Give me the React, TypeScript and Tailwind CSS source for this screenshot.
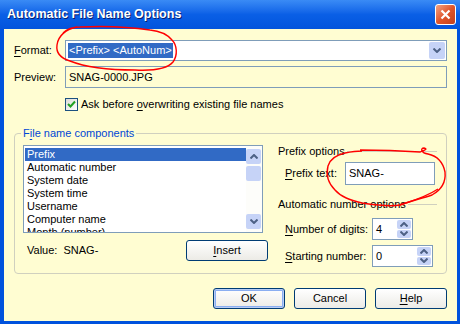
import React from "react";

const Chevron = ({ up = false }: { up?: boolean }) => (
  <svg width="8" height="5" viewBox="0 0 8 5" className={up ? "rotate-180" : ""}>
    <path d="M0.5 0.5 L4 4 L7.5 0.5" fill="none" stroke="#4d6185" strokeWidth="2" />
  </svg>
);

const U = ({ children }: { children: React.ReactNode }) => (
  <span className="underline underline-offset-[2px]">{children}</span>
);

const SpinBox = ({ value, w }: { value: string; w: string }) => (
  <div className={`flex h-[22px] border border-[#7f9db9] bg-white ${w}`}>
    <div className="flex-1 pl-[3px] leading-[20px]">{value}</div>
    <div className="flex w-[16px] flex-col gap-px p-px">
      <div className="flex flex-1 items-center justify-center rounded-[2px] bg-[#c6d3f7]">
        <Chevron up />
      </div>
      <div className="flex flex-1 items-center justify-center rounded-[2px] bg-[#c6d3f7]">
        <Chevron />
      </div>
    </div>
  </div>
);

const XpButton = ({
  children,
  def = false,
  w = "w-[72px]",
}: {
  children: React.ReactNode;
  def?: boolean;
  w?: string;
}) => (
  <button
    className={`flex h-[21px] items-center justify-center rounded-[3px] border border-[#003c74] bg-gradient-to-b from-white to-[#ecebe6] text-[11px] text-black ${w} ${
      def ? "shadow-[inset_0_0_0_1px_#b9cdf5,inset_0_0_0_2px_#8aaef1]" : ""
    }`}
  >
    {children}
  </button>
);

const items = [
  "Prefix",
  "Automatic number",
  "System date",
  "System time",
  "Username",
  "Computer name",
  "Month (number)",
];

export default function App() {
  return (
    <div className="relative flex h-[324px] w-[460px] flex-col overflow-hidden bg-[#0052dd] font-['Liberation_Sans',Arial,sans-serif] text-[11px] text-black">
      {/* title bar */}
      <div className="flex h-[29px] items-center justify-between bg-gradient-to-b from-[#3a8bf5] via-[#0a5fe6] to-[#0354dc] pl-[7px] pr-[4px]">
        <span className="text-[12.5px] font-bold text-white [text-shadow:1px_1px_0_#0a1f6e]">
          Automatic File Name Options
        </span>
        <div className="flex h-[21px] w-[21px] items-center justify-center rounded-[3px] border border-white bg-gradient-to-br from-[#f0a283] via-[#e0552b] to-[#c2401c]">
          <svg width="11" height="11" viewBox="0 0 11 11">
            <path d="M1.5 1.5 L9.5 9.5 M9.5 1.5 L1.5 9.5" stroke="white" strokeWidth="2.2" />
          </svg>
        </div>
      </div>

      {/* client area */}
      <div className="mb-[3px] ml-[4px] mr-[3px] flex flex-1 flex-col bg-[#fffdd2] pl-[10px] pr-[10px]">
        <div className="mt-[11px] flex h-[21px] items-center">
          <span className="w-[51px]">
            <U>F</U>ormat:
          </span>
          <div className="flex h-[21px] flex-1 items-center border border-[#7f9db9] bg-white pl-[2px]">
            <span className="bg-[#316ac5] px-px leading-[15px] text-white">&lt;Prefix&gt; &lt;AutoNum&gt;</span>
            <div className="ml-auto mr-px flex h-[17px] w-[16px] items-center justify-center rounded-[2px] bg-[#c6d3f7]">
              <Chevron />
            </div>
          </div>
        </div>

        <div className="mt-[5px] flex h-[22px] items-center">
          <span className="w-[51px]">Preview:</span>
          <div className="flex h-[22px] flex-1 items-center border border-[#7f9db9] pl-[3px]">SNAG-0000.JPG</div>
        </div>

        <div className="mt-[10px] ml-[51px] flex h-[13px] items-center gap-[3px]">
          <div className="flex h-[13px] w-[13px] items-center justify-center border border-[#1c5180] bg-gradient-to-br from-[#dcdcd7] to-white">
            <svg width="9" height="9" viewBox="0 0 9 9">
              <path d="M1 4 L3.5 6.5 L8 1.5" fill="none" stroke="#21a121" strokeWidth="2" />
            </svg>
          </div>
          <span>
            Ask before <U>o</U>verwriting existing file names
          </span>
        </div>

        <fieldset className="mt-[16px] h-[147px] rounded-[4px] border border-[#d0d0bf]">
          <legend className="ml-[6px] px-[2px] leading-[13px] text-[#0046d5]">
            F<U>i</U>le name components
          </legend>
          <div className="flex pl-[8px] pr-[9px] pt-[5px]">
            <div className="flex flex-col">
              <div className="flex h-[88px] w-[240px] border border-[#7f9db9] bg-white">
                <div className="flex-1 overflow-hidden pl-px pt-[2px]">
                  {items.map((it, i) => (
                    <div
                      key={it}
                      className={`h-[13px] pl-[2px] leading-[13px] ${i === 0 ? "bg-[#316ac5] text-white" : ""}`}
                    >
                      {it}
                    </div>
                  ))}
                </div>
                <div className="flex w-[16px] flex-col justify-between bg-[#fdfdfa] py-[3px] pr-px">
                  <div className="flex flex-col gap-[2px]">
                    <div className="flex h-[15px] items-center justify-center rounded-[2px] bg-[#c6d3f7]">
                      <Chevron up />
                    </div>
                    <div className="h-[15px] rounded-[2px] bg-[#c6d3f7]" />
                  </div>
                  <div className="flex h-[15px] items-center justify-center rounded-[2px] bg-[#c6d3f7]">
                    <Chevron />
                  </div>
                </div>
              </div>
              <div className="mt-[7px] flex h-[21px] items-center">
                <span className="pl-[4px]">Value:&nbsp;&nbsp;SNAG-</span>
                <div className="ml-auto -mr-[5px]">
                  <XpButton w="w-[82px]">
                    <U>I</U>nsert
                  </XpButton>
                </div>
              </div>
            </div>

            <div className="ml-[15px] flex flex-1 flex-col">
              <div className="flex h-[13px] items-center">
                <span>Prefix options</span>
                <div className="ml-[2px] flex-1 border-t border-[#d0d0bf]" />
              </div>
              <div className="mt-[4px] flex h-[23px] items-center pl-[7px]">
                <span className="w-[60px]">
                  <U>P</U>refix text:
                </span>
                <div className="flex h-[23px] w-[90px] items-center border border-[#7f9db9] bg-white pl-[3px]">SNAG-</div>
              </div>
              <div className="mt-[13px] flex h-[13px] items-center">
                <span>Automatic number options</span>
                <div className="ml-[2px] flex-1 border-t border-[#d0d0bf]" />
              </div>
              <div className="mt-[7px] flex h-[22px] items-center pl-[7px]">
                <span className="w-[87px]">
                  <U>N</U>umber of digits:
                </span>
                <SpinBox value="4" w="w-[41px]" />
              </div>
              <div className="mt-[5px] flex h-[22px] items-center pl-[7px]">
                <span className="w-[87px]">
                  <U>S</U>tarting number:
                </span>
                <SpinBox value="0" w="w-[61px]" />
              </div>
            </div>
          </div>
        </fieldset>

        <div className="mt-[14px] flex justify-end gap-[9px]">
          <XpButton def>OK</XpButton>
          <XpButton>Cancel</XpButton>
          <XpButton>
            <U>H</U>elp
          </XpButton>
        </div>
      </div>

      {/* red hand-drawn annotations */}
      <svg className="pointer-events-none absolute left-0 top-0" width="460" height="324" viewBox="0 0 460 324">
        <path
          d="M77 27 C66 29 58 36 57 45 C56 52 60 58 70 61 C85 67 110 70 135 70 C155 71 168 68 173 62 C178 55 177 45 172 40 C167 34 160 31 150 30 C130 27 100 26 80 27 C72 27 66 30 63 33"
          fill="none"
          stroke="#ff0000"
          strokeWidth="1.4"
        />
        <path
          d="M360 150 C380 150 405 151 420 152 C425 150 428 149 424 148 C420 148 421 153 428 154 C437 156 443 162 445 172 C446 182 441 190 432 195 C420 199 410 201 400 205 C390 207 375 205 362 203 C350 200 341 197 335 190 C328 183 326 174 328 166 C330 159 336 155 345 153 C350 152 355 151 362 151"
          fill="none"
          stroke="#ff0000"
          strokeWidth="1.4"
        />
        <path d="M400 205 C412 201 426 197 438 189" fill="none" stroke="#ff0000" strokeWidth="1.4" />
      </svg>
    </div>
  );
}
